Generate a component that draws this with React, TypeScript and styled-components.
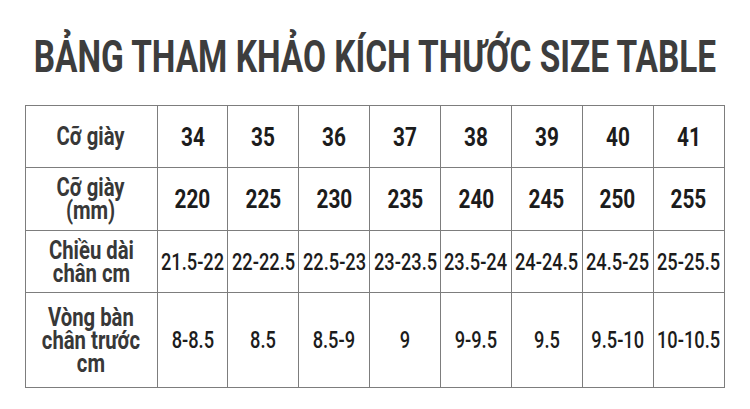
import * as React from "react";
import styled, {createGlobalStyle} from "styled-components";

const GlobalStyle = createGlobalStyle`
	html, body {
		margin: 0;
		padding: 0;
		background: #fff;
	}
	body {
		font-family: Roboto, "Liberation Sans", sans-serif;
	}
`;

const Page = styled.div`
	width: 750px;
	height: 409px;
	display: flex;
	flex-direction: column;
	align-items: center;
	overflow: hidden;
`;

const Header = styled.div`
	box-sizing: border-box;
	width: 100%;
	height: 105px;
	padding-top: 34px;
	display: flex;
	justify-content: center;
`;

// Oswald-like narrow look: squeeze Roboto horizontally.
// negative side margins keep wide text centred in narrow cells
const Squeeze = styled.span<{k: number}>`
	display: inline-block;
	white-space: nowrap;
	margin: 0 -40px;
	transform: scaleX(${(p) => p.k});
	transform-origin: center;
`;

const Title = styled.h1`
	margin: 0;
	font-size: 45px;
	line-height: 45px;
	font-weight: 700;
	color: #3d3d3d;
	white-space: nowrap;
`;

const Table = styled.table`
	border-collapse: collapse;
	table-layout: fixed;
	width: 700px;
	margin-left: -1px;
`;

const Row = styled.tr<{h: number}>`
	height: ${(p) => p.h}px;
`;

const Label = styled.th`
	border: 1px solid #7d7d7d;
	font-size: 26px;
	font-weight: 700;
	line-height: 23px;
	color: #383838;
	text-align: center;
	padding: 0;
`;

const Cell = styled.td<{small?: boolean}>`
	border: 1px solid #7d7d7d;
	font-size: ${(p) => (p.small ? "24px" : "26px")};
	font-weight: ${(p) => (p.small ? 500 : 700)};
	color: #1c1c1c;
	text-align: center;
	padding: 0;
	white-space: nowrap;
`;

const rows: {label: React.ReactNode; h: number; small?: boolean; values: string[]}[] = [
	{label: "Cỡ giày", h: 62, values: ["34", "35", "36", "37", "38", "39", "40", "41"]},
	{label: <>Cỡ giày<br/>(mm)</>, h: 63, values: ["220", "225", "230", "235", "240", "245", "250", "255"]},
	{label: <>Chiều dài<br/>chân cm</>, h: 62, small: true, values: ["21.5-22", "22-22.5", "22.5-23", "23-23.5", "23.5-24", "24-24.5", "24.5-25", "25-25.5"]},
	{label: <>Vòng bàn<br/>chân trước<br/>cm</>, h: 95, small: true, values: ["8-8.5", "8.5", "8.5-9", "9", "9-9.5", "9.5", "9.5-10", "10-10.5"]},
];

export default function App() {
	return (
		<Page>
			<GlobalStyle/>
			<Header>
				<Title>
					<Squeeze k={0.742}>BẢNG THAM KHẢO KÍCH THƯỚC SIZE TABLE</Squeeze>
				</Title>
			</Header>
			<Table>
				<colgroup>
					<col style={{width: 132}}/>
					{rows[0].values.map((v) => <col key={v}/>)}
				</colgroup>
				<tbody>
					{rows.map((row, i) => (
						<Row key={i} h={row.h}>
							<Label>
								<Squeeze k={0.78}>{row.label}</Squeeze>
							</Label>
							{row.values.map((v, j) => (
								<Cell key={j} small={row.small}>
									<Squeeze k={row.small ? 0.76 : 0.8}>{v}</Squeeze>
								</Cell>
							))}
						</Row>
					))}
				</tbody>
			</Table>
		</Page>
	);
}
